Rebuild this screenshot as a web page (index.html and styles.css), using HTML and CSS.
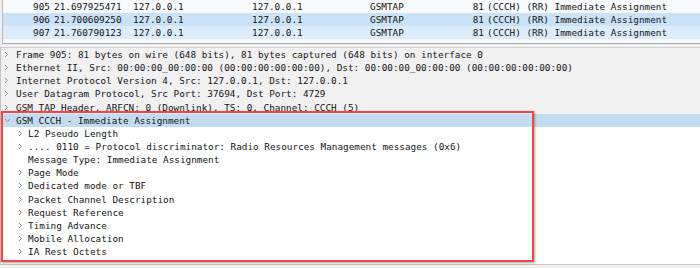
FILE: index.html
```html
<!DOCTYPE html>
<html lang="en">
<head>
  <meta charset="UTF-8">
  <title>Wireshark - GSM CCCH</title>
  <link rel="stylesheet" href="styles.css">
</head>
<body>

  <!-- Packet list (scrolled) -->
  <div class="packet-list">
    <div class="packet-row row-plain">
      <span class="col-no">905</span><span class="col-time">21.697925471</span><span class="col-src">127.0.0.1</span><span class="col-dst">127.0.0.1</span><span class="col-proto">GSMTAP</span><span class="col-len">81</span><span class="col-info">(CCCH) (RR) Immediate Assignment</span>
    </div>
    <div class="packet-row row-selected">
      <span class="col-no">906</span><span class="col-time">21.700609250</span><span class="col-src">127.0.0.1</span><span class="col-dst">127.0.0.1</span><span class="col-proto">GSMTAP</span><span class="col-len">81</span><span class="col-info">(CCCH) (RR) Immediate Assignment</span>
    </div>
    <div class="packet-row row-marked">
      <span class="col-no">907</span><span class="col-time">21.760790123</span><span class="col-src">127.0.0.1</span><span class="col-dst">127.0.0.1</span><span class="col-proto">GSMTAP</span><span class="col-len">81</span><span class="col-info">(CCCH) (RR) Immediate Assignment</span>
    </div>
    <div class="packet-row row-plain"></div>
  </div>

  <div class="splitter"></div>

  <!-- Packet details tree -->
  <div class="details">
    <div class="tree-row shaded"><span class="toggle"><svg width="5" height="7" viewBox="0 0 5 7"><polyline points="1,1 3.5,3.5 1,6"/></svg></span><span>Frame 905: 81 bytes on wire (648 bits), 81 bytes captured (648 bits) on interface 0</span></div>
    <div class="tree-row shaded"><span class="toggle"><svg width="5" height="7" viewBox="0 0 5 7"><polyline points="1,1 3.5,3.5 1,6"/></svg></span><span>Ethernet II, Src: 00:00:00_00:00:00 (00:00:00:00:00:00), Dst: 00:00:00_00:00:00 (00:00:00:00:00:00)</span></div>
    <div class="tree-row shaded"><span class="toggle"><svg width="5" height="7" viewBox="0 0 5 7"><polyline points="1,1 3.5,3.5 1,6"/></svg></span><span>Internet Protocol Version 4, Src: 127.0.0.1, Dst: 127.0.0.1</span></div>
    <div class="tree-row shaded"><span class="toggle"><svg width="5" height="7" viewBox="0 0 5 7"><polyline points="1,1 3.5,3.5 1,6"/></svg></span><span>User Datagram Protocol, Src Port: 37694, Dst Port: 4729</span></div>
    <div class="tree-row shaded"><span class="toggle"><svg width="5" height="7" viewBox="0 0 5 7"><polyline points="1,1 3.5,3.5 1,6"/></svg></span><span>GSM TAP Header, ARFCN: 0 (Downlink), TS: 0, Channel: CCCH (5)</span></div>
    <div class="tree-row selected"><span class="toggle"><svg width="7" height="7" viewBox="0 0 7 7"><polyline points="1,2 3.5,4.5 6,2"/></svg></span><span>GSM CCCH - Immediate Assignment</span></div>
    <div class="tree-row child"><span class="toggle"><svg width="5" height="7" viewBox="0 0 5 7"><polyline points="1,1 3.5,3.5 1,6"/></svg></span><span>L2 Pseudo Length</span></div>
    <div class="tree-row child"><span class="toggle"><svg width="5" height="7" viewBox="0 0 5 7"><polyline points="1,1 3.5,3.5 1,6"/></svg></span><span>.... 0110 = Protocol discriminator: Radio Resources Management messages (0x6)</span></div>
    <div class="tree-row child"><span class="toggle"></span><span>Message Type: Immediate Assignment</span></div>
    <div class="tree-row child"><span class="toggle"><svg width="5" height="7" viewBox="0 0 5 7"><polyline points="1,1 3.5,3.5 1,6"/></svg></span><span>Page Mode</span></div>
    <div class="tree-row child"><span class="toggle"><svg width="5" height="7" viewBox="0 0 5 7"><polyline points="1,1 3.5,3.5 1,6"/></svg></span><span>Dedicated mode or TBF</span></div>
    <div class="tree-row child"><span class="toggle"><svg width="5" height="7" viewBox="0 0 5 7"><polyline points="1,1 3.5,3.5 1,6"/></svg></span><span>Packet Channel Description</span></div>
    <div class="tree-row child"><span class="toggle"><svg width="5" height="7" viewBox="0 0 5 7"><polyline points="1,1 3.5,3.5 1,6"/></svg></span><span>Request Reference</span></div>
    <div class="tree-row child"><span class="toggle"><svg width="5" height="7" viewBox="0 0 5 7"><polyline points="1,1 3.5,3.5 1,6"/></svg></span><span>Timing Advance</span></div>
    <div class="tree-row child"><span class="toggle"><svg width="5" height="7" viewBox="0 0 5 7"><polyline points="1,1 3.5,3.5 1,6"/></svg></span><span>Mobile Allocation</span></div>
    <div class="tree-row child"><span class="toggle"><svg width="5" height="7" viewBox="0 0 5 7"><polyline points="1,1 3.5,3.5 1,6"/></svg></span><span>IA Rest Octets</span></div>

    <!-- Annotation frame drawn over the tree -->
    <div class="highlight-box"></div>
  </div>

</body>
</html>
```

FILE: styles.css
```css
/* Page */
body {
  margin: 0;
  width: 700px;
  height: 268px;
  overflow: hidden;
  background: #f0f0f0;
  font-family: "DejaVu Sans Mono", "Liberation Mono", monospace;
  font-size: 9.35px;
  color: #141414;
}

/* Packet list */
.packet-list {
  height: 43px;
  margin-left: 2px;
  border-left: 1px solid #b9b9b9;
  border-bottom: 1px solid #a8a8a8;
  overflow: hidden;
  background: #fafafa;
}

.packet-row {
  display: flex;
  height: 13px;
  line-height: 13px;
  white-space: nowrap;
}

.row-plain {
  background: #f8fafc;
}

.row-selected {
  background: #cae2f7;
}

.row-marked {
  background: #dcecfa;
}

.packet-row span {
  flex: none;
  box-sizing: border-box;
}

.col-no {
  width: 47px;
  text-align: right;
}

.col-time {
  width: 83px;
  padding-left: 4px;
}

.col-src {
  width: 119px;
}

.col-dst {
  width: 118px;
}

.col-proto {
  width: 70px;
}

.col-len {
  width: 44px;
  text-align: right;
}

.col-info {
  padding-left: 3px;
}

/* Splitter between panes */
.splitter {
  height: 3px;
  background: #f0f0f0;
}

/* Details tree */
.details {
  position: relative;
  height: 216px;
  border-top: 1px solid #cfcfcf;
  border-left: 1px solid #c4c4c4;
  border-bottom: 1px solid #c8c8c8;
  background: #ffffff;
}

.tree-row {
  display: flex;
  align-items: center;
  height: 13.15px;
  white-space: nowrap;
}

.tree-row.shaded {
  background: #f1f1f1;
}

.tree-row.selected {
  background: #c5dcf0;
}

.tree-row.child {
  padding-left: 12px;
}

.toggle {
  display: flex;
  align-items: center;
  flex: none;
  width: 15px;
  height: 100%;
  padding-left: 3px;
  box-sizing: border-box;
}

.child .toggle {
  padding-left: 5px;
}

.toggle svg polyline {
  fill: none;
  stroke: #8c8c8c;
  stroke-width: 1;
}

/* Red annotation frame */
.highlight-box {
  position: absolute;
  top: 63px;
  left: 0;
  width: 533px;
  height: 151px;
  box-sizing: border-box;
  border: 2px solid #f24646;
  box-shadow: 1px 1px 2px rgba(0, 0, 0, 0.35);
}
```
